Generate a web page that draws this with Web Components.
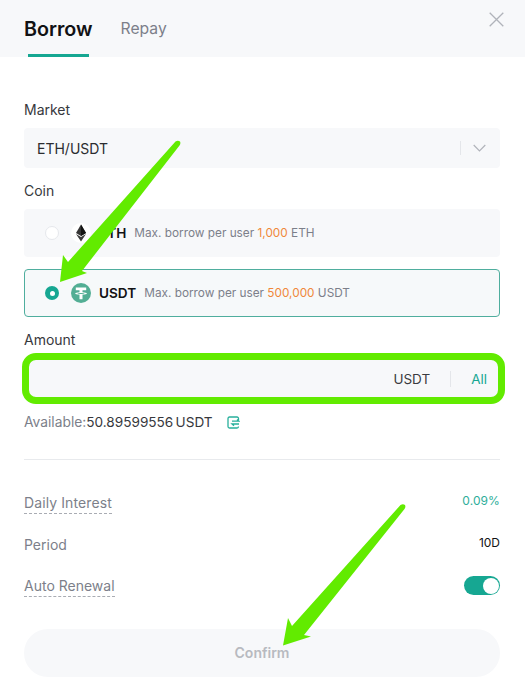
<!DOCTYPE html>
<html><head><meta charset="utf-8"><style>
html,body{margin:0;padding:0;background:#fff;}
body{font-family:Inter,"Liberation Sans",sans-serif;width:525px;height:695px;overflow:hidden;position:relative}
</style></head><body>
<borrow-dialog></borrow-dialog>
<script>
function def(name,css,html){customElements.define(name,class extends HTMLElement{constructor(){super();const r=this.attachShadow({mode:'open'});r.innerHTML='<style>'+css+'</style>'+html;}});}
def('tab-head',`:host{display:flex;height:57px;background:#f7f8fa;box-sizing:border-box;padding:0 24px;position:relative;gap:28px}
.t{height:57px;box-sizing:border-box;padding-top:17px;line-height:24px;font-size:15.7px;color:#7c7f8a;position:relative}
.a{font-size:19.7px;font-weight:600;color:#121214}
.a::after{content:"";position:absolute;left:4px;right:4px;bottom:0;height:3px;background:#16a792}
svg{position:absolute;right:21px;top:12px}`,
`<div class="t a">Borrow</div><div class="t">Repay</div><svg width="15" height="15" viewBox="0 0 15 15" fill="none" stroke="#b0b3ba" stroke-width="1.3"><path d="M.7.7l13.600 13.600M14.300.7.7 14.300"/></svg>`);
def('field-label',`:host{display:block;font-size:14px;line-height:20px;color:#37383d}`,`<slot></slot>`);
def('market-select',`:host{display:flex;align-items:center;height:40px;background:#f7f8fa;border-radius:4px;padding:0 14px 0 13px;font-size:14px;color:#2b2c30}
span{flex:1}i{width:1px;height:14px;background:#e4e6ea;margin-right:12px}`,
`<span><slot></slot></span><i></i><svg width="13" height="8" viewBox="0 0 13 8" fill="none" stroke="#b0b3ba" stroke-width="1.2"><path d="M.7 1l5.800 5.800L12.300 1"/></svg>`);
def('coin-option',`:host{display:flex;align-items:center;height:48px;box-sizing:border-box;background:#f7f8fa;border-radius:4px;padding-left:21px;font-size:11.8px;color:#7c7f8a}
:host([selected]){border:1px solid #4fae9e;background:#f6f9fa;padding-left:20px}
.r{width:14px;height:14px;border-radius:50%;background:#fff;border:1px solid #e6e8ec;box-sizing:border-box;flex:none}
:host([selected]) .r{background:#16a792;border:0;display:flex;align-items:center;justify-content:center}
:host([selected]) .r::after{content:"";width:5px;height:5px;border-radius:50%;background:#fff}
.ic{width:20px;height:20px;margin:0 8px 0 12px;flex:none;display:flex}
b{font-size:13.6px;font-weight:600;color:#121214;margin-right:8px}`,
`<div class="r"></div><div class="ic"><slot name="icon"></slot></div><b><slot name="coin"></slot></b><span><slot></slot></span>`);
def('amount-input',`:host{display:flex;align-items:center;justify-content:flex-end;height:51px;box-sizing:border-box;margin:0 -4.5px 0 -2px;border:7px solid #62eb00;border-radius:14px;background:#f7f8fa;font-size:13.5px;color:#3a3b40;padding-right:10.5px}
i{width:1px;height:16px;background:#e4e6ea;margin:0 20px}
a{color:#16a792}`,`<span>USDT</span><i></i><a>All</a>`);
def('avail-line',`:host{display:flex;align-items:center;font-size:13.8px;line-height:20px;color:#7c7f8a}
span{color:#37383d;font-size:13.6px;word-spacing:-1.5px}svg{margin-left:14px}`,
`Available:<span>50.89599556 USDT</span><svg width="13" height="13" viewBox="0 0 13 13" fill="none" stroke="#28b09c" stroke-width="1.3"><path d="M11.5 4V2.5a1.500 1.500 0 0 0-1.500-1.500H2.500A1.500 1.500 0 0 0 1 2.500v8A1.500 1.500 0 0 0 2.500 12H10a1.500 1.500 0 0 0 1.500-1.500"/><path d="M5 5.200h7L10 3.400M12 8H5l2 1.800"/></svg>`);
def('info-row',`:host{display:flex;justify-content:space-between;align-items:flex-start;height:41.5px;font-size:14px;color:#7c7f8a;line-height:20px}
:host([dash]) .l{border-bottom:1px dashed #a9acb3}
.v{font-size:12px;line-height:16px;color:#121214}`,
`<div class="l"><slot></slot></div><div class="v"><slot name="v"></slot></div>`);
def('toggle-switch',`:host{display:block;width:36px;height:19px;border-radius:10px;background:#16a792;position:relative}
:host::after{content:"";position:absolute;right:1.500px;top:1.500px;width:16px;height:16px;border-radius:50%;background:#fff}`,``);
def('borrow-dialog',`:host{display:block;width:525px;height:695px;position:relative}
main{display:flex;flex-direction:column;padding:43px 25px 0 24px}
.m1{margin-top:8px}
coin-option+coin-option{margin-top:12px}
hr{border:0;height:1px;background:#e8eaed;margin:0}
button{all:unset;display:block;height:48px;border-radius:24px;background:#f7f8fa;color:#b8bac0;font-size:14px;font-weight:600;text-align:center;line-height:48px}
svg.ov{position:absolute;left:0;top:0;pointer-events:none}`,
`<tab-head></tab-head><main>
<field-label>Market</field-label>
<market-select class="m1">ETH/USDT</market-select>
<field-label style="margin-top:13px">Coin</field-label>
<coin-option style="margin-top:8px"><svg slot="icon" width="20" height="20" viewBox="0 0 20 20"><circle cx="10" cy="10" r="10" fill="#fff"/><path d="M10 1.500 5 10l5 3 5-3z" fill="#343434"/><path d="M10 1.500V13l5-3z" fill="#141414"/><path d="M5 11l5 7.500 5-7.500-5 3z" fill="#3c3c3c"/></svg><span slot="coin">ETH</span>Max. borrow per user <span style="color:#f0883a">1,000</span> ETH</coin-option>
<coin-option selected><svg slot="icon" width="20" height="20" viewBox="0 0 20 20"><circle cx="10" cy="10" r="10" fill="#52ae94"/><path d="M4.800 4.600h10.400v2.600h-3.700v2c2.300.1 4.400.6 4.400 1.200s-2.100 1.100-4.400 1.200v4.600h-3v-4.600c-2.300-.1-4.300-.6-4.300-1.200s2-1.100 4.300-1.200v-2H4.800z" fill="#fff"/><path d="M6 10.400c1 .4 2.400.6 4 .6s3-.2 4-.6c-1-.3-2.300-.5-4-.5s-3 .2-4 .5z" fill="#52ae94"/></svg><span slot="coin">USDT</span>Max. borrow per user <span style="color:#f0883a">500,000</span> USDT</coin-option>
<field-label style="margin-top:13px">Amount</field-label>
<amount-input style="margin-top:3px"></amount-input>
<avail-line style="margin-top:8px"></avail-line>
<hr style="margin-top:27px">
<info-row dash style="margin-top:33px;letter-spacing:.1px">Daily Interest<span slot="v" style="color:#2eae9a">0.09%</span></info-row>
<info-row>Period<span slot="v">10D</span></info-row>
<info-row dash>Auto Renewal<toggle-switch slot="v"></toggle-switch></info-row>
<button style="margin-top:11px">Confirm</button>
</main>
<svg class="ov" width="525" height="695"><path fill="#62eb00" d="M175.500 141.500Q178 140 180 141.500Q181 143.500 179.500 145.500L82 271 87 273 60 282 63 255 68 262z"/><path fill="#62eb00" d="M400.500 505Q403 503.500 405 505Q406 507 404.500 509L304 635 311 636.500 283 645.500 288 618 292 626z"/></svg>`);
</script></body></html>
